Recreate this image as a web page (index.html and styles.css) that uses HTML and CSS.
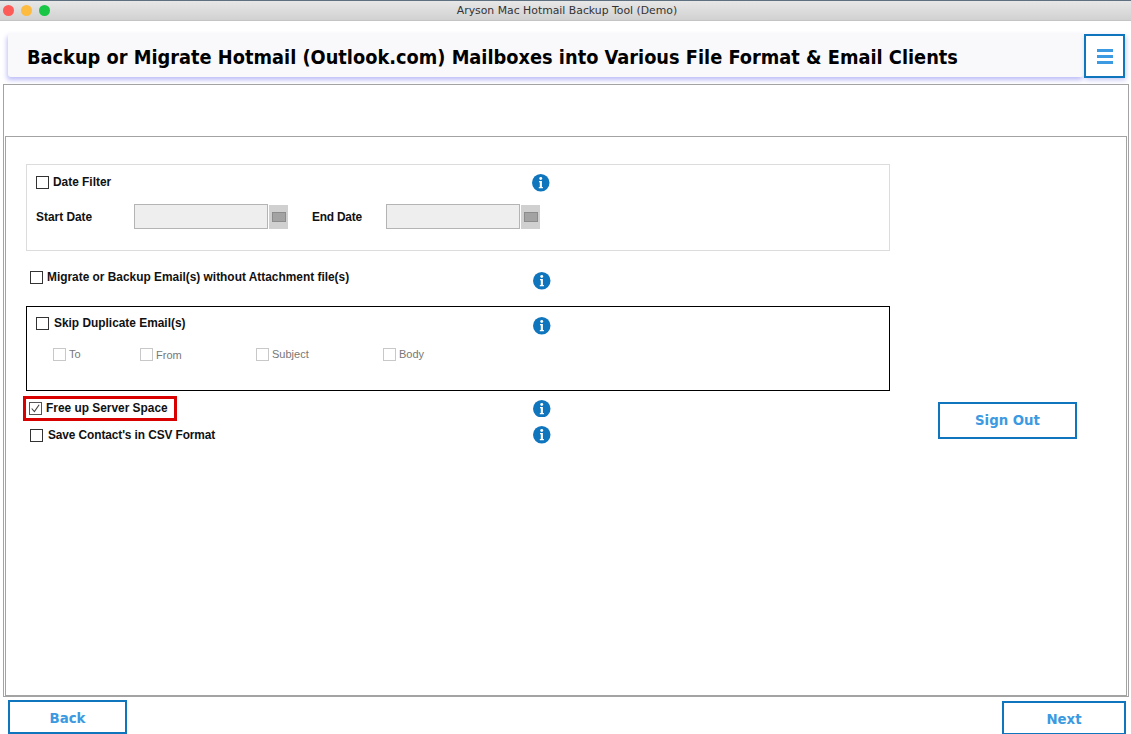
FILE: index.html
```html
<!DOCTYPE html>
<html lang="en">
<head>
<meta charset="utf-8">
<title>Aryson Mac Hotmail Backup Tool (Demo)</title>
<link rel="stylesheet" href="styles.css">
</head>
<body>
<div class="app">
  <div class="titlebar">
    <div class="lights"><span class="light red"></span><span class="light yellow"></span><span class="light green"></span></div>
    <div class="wintitle">Aryson Mac Hotmail Backup Tool (Demo)</div>
  </div>
  <header class="header">
    <h1 class="banner">Backup or Migrate Hotmail (Outlook.com) Mailboxes into Various File Format &amp; Email Clients</h1>
    <button class="menu" aria-label="Menu"><span></span><span></span><span></span></button>
  </header>
  <div class="outer">
    <div class="inner">
      <div class="form">
        <section class="datebox">
          <div class="row row-date">
            <div class="lead"><span class="cb"></span><span class="lbl">Date Filter</span></div>
            <svg class="info" viewBox="0 0 18 18"><circle cx="9" cy="9" r="9" fill="#0f75bd"/><circle cx="9" cy="4.6" r="1.5" fill="#fff"/><path d="M7.2 7.2h3v6.2h1v1.2H7v-1.2h1V8.4h-.8z" fill="#fff"/></svg>
          </div>
          <div class="dates">
            <span class="lbl dlabel">Start Date</span>
            <span class="dinput"></span><span class="dbtn"><i></i></span>
            <span class="lbl dlabel dlabel-end">End Date</span>
            <span class="dinput"></span><span class="dbtn"><i></i></span>
          </div>
        </section>
        <div class="row row-migrate">
          <div class="lead"><span class="cb"></span><span class="lbl">Migrate or Backup Email(s) without Attachment file(s)</span></div>
          <svg class="info" viewBox="0 0 18 18"><circle cx="9" cy="9" r="9" fill="#0f75bd"/><circle cx="9" cy="4.6" r="1.5" fill="#fff"/><path d="M7.2 7.2h3v6.2h1v1.2H7v-1.2h1V8.4h-.8z" fill="#fff"/></svg>
        </div>
        <section class="skipbox">
          <div class="row row-skip">
            <div class="lead"><span class="cb"></span><span class="lbl">Skip Duplicate Email(s)</span></div>
            <svg class="info" viewBox="0 0 18 18"><circle cx="9" cy="9" r="9" fill="#0f75bd"/><circle cx="9" cy="4.6" r="1.5" fill="#fff"/><path d="M7.2 7.2h3v6.2h1v1.2H7v-1.2h1V8.4h-.8z" fill="#fff"/></svg>
          </div>
          <div class="subs">
            <div class="sub sub-to"><span class="cb off"></span><span>To</span></div>
            <div class="sub sub-from"><span class="cb off"></span><span>From</span></div>
            <div class="sub sub-subject"><span class="cb off"></span><span>Subject</span></div>
            <div class="sub"><span class="cb off"></span><span>Body</span></div>
          </div>
        </section>
        <div class="row row-free">
          <div class="lead">
            <div class="highlight"><span class="cb on"><svg viewBox="0 0 13 13"><path d="M2 6.5l3.2 3.6 5.6-8" fill="none" stroke="#444" stroke-width="1.3"/></svg></span><span class="lbl">Free up Server Space</span></div>
          </div>
          <svg class="info" viewBox="0 0 18 18"><circle cx="9" cy="9" r="9" fill="#0f75bd"/><circle cx="9" cy="4.6" r="1.5" fill="#fff"/><path d="M7.2 7.2h3v6.2h1v1.2H7v-1.2h1V8.4h-.8z" fill="#fff"/></svg>
        </div>
        <div class="row row-save">
          <div class="lead"><span class="cb"></span><span class="lbl">Save Contact's in CSV Format</span></div>
          <svg class="info" viewBox="0 0 18 18"><circle cx="9" cy="9" r="9" fill="#0f75bd"/><circle cx="9" cy="4.6" r="1.5" fill="#fff"/><path d="M7.2 7.2h3v6.2h1v1.2H7v-1.2h1V8.4h-.8z" fill="#fff"/></svg>
        </div>
      </div>
      <button class="btn signout">Sign Out</button>
    </div>
  </div>
  <footer class="footer">
    <button class="btn back">Back</button>
    <button class="btn next">Next</button>
  </footer>
</div>
</body>
</html>
```

FILE: styles.css
```css
* { box-sizing: border-box; }
html, body { margin: 0; padding: 0; background: #fff; overflow: hidden; }
.app { width: 1131px; height: 734px; display: flex; flex-direction: column; font-family: "Liberation Sans", Arial, sans-serif; overflow: hidden; }

.titlebar { height: 21px; flex: none; position: relative; display: flex; align-items: center; justify-content: center; background: linear-gradient(#e7e7e7, #d1d1d1); border-top: 1px solid #5f7180; border-bottom: 1px solid #c4c4c4; }
.lights { position: absolute; left: 3px; top: 4px; display: flex; gap: 7px; }
.light { width: 11px; height: 11px; border-radius: 50%; }
.red { background: #fc5b57; }
.yellow { background: #fdbb40; }
.green { background: #19c645; }
.wintitle { font-family: "DejaVu Sans", sans-serif; font-size: 10.85px; color: #333; padding-left: 3px; }

.header { flex: none; height: 45px; margin: 12px 6px 0 8px; display: flex; }
.banner { flex: 1; margin: 0; height: 44px; padding-left: 19px; background: #f9f9fb; border-radius: 3px; box-shadow: -1px 3px 5px #bdbdf8; font: bold 19.8px/49px "DejaVu Sans Condensed", "DejaVu Sans", sans-serif; font-stretch: condensed; color: #000; white-space: nowrap; overflow: hidden; }
.menu { flex: none; width: 41px; height: 44px; margin-top: 1px; padding: 0; background: #fff; border: 2px solid #0f75bd; box-shadow: 1px 2px 5px #c9c9f5; display: flex; flex-direction: column; align-items: center; justify-content: center; gap: 3px; }
.menu span { display: block; width: 16px; height: 3px; background: #3b9ae1; }

.outer { flex: none; height: 613px; margin: 6px 2px 0 3px; padding: 51px 1px 0; border: 1px solid #a3a3a3; }
.inner { height: 560px; padding: 27px 0 0 20px; border: 1px solid #a3a3a3; display: flex; align-items: flex-start; }
.form { width: 864px; flex: none; }

.row { display: flex; align-items: center; min-height: 18px; }
.lead { width: 505px; flex: none; display: flex; align-items: center; }
.info { width: 17.5px; height: 17.5px; flex: none; display: block; }
.cb { width: 13px; height: 13px; flex: none; display: block; border: 1px solid #333; background: #fff; }
.cb.off { border-color: #c8c8c8; }
.cb.on { border-color: #555; }
.cb svg { display: block; width: 11px; height: 11px; }
.lbl { font-size: 11.9px; font-weight: bold; color: #111; margin-left: 4px; white-space: nowrap; }

.datebox { height: 87px; border: 1px solid #dcdcdc; padding: 9px 0 0 9px; }
.row-date .lead { width: 496px; margin-top: -2px; }
.dates { display: flex; align-items: center; margin-top: 12px; }
.dlabel { width: 98px; flex: none; margin-left: 0; }
.dlabel-end { width: 74px; margin-left: 24px; letter-spacing: -0.2px; }
.dinput { width: 134px; height: 25px; flex: none; background: #eee; border: 1px solid #b4b4b4; }
.dbtn { width: 19px; height: 24px; flex: none; margin: 1px 0 0 1px; background: #d0d0d0; display: flex; align-items: center; justify-content: center; }
.dbtn i { display: block; width: 14px; height: 10px; background: #a3a3a3; border: 1px solid #8c8c8c; }

.row-migrate { margin-top: 21px; padding-left: 4px; }
.row-migrate .lead { width: 503px; margin-top: -8px; }
.skipbox { height: 85px; margin-top: 16px; border: 1px solid #000; padding: 10px 0 0 9px; }
.row-skip .lead { width: 497px; margin-top: -6px; }
.row-skip .lbl { margin-left: 5px; }
.subs { display: flex; margin-top: 12px; padding-left: 17px; }
.sub { display: flex; align-items: center; gap: 3px; font-size: 11px; color: #777; width: 87px; }
.sub-from { width: 116px; margin-top: 1px; }
.sub-subject { width: 127px; }

.row-free { margin-top: 5px; height: 25px; }
.highlight { display: flex; align-items: center; width: 154px; height: 25px; margin-left: -3px; padding-left: 3px; border: 3px solid #d90000; }
.row-free .lead { width: 507px; margin-top: -1px; }
.row-save { margin-top: 5px; padding-left: 4px; }
.row-save .lead { width: 503px; }
.row-save .lbl { margin-left: 5px; letter-spacing: -0.1px; }

.btn { background: #fff; border: 2px solid #0f75bd; color: #3b9ae1; font: bold 14.8px "DejaVu Sans Condensed", "DejaVu Sans", sans-serif; font-stretch: condensed; padding: 0; }
.signout { width: 139px; height: 37px; margin: 238px 0 0 48px; flex: none; padding-bottom: 2px; }
.footer { flex: none; display: flex; justify-content: space-between; padding: 3px 5px 0 8px; align-items: flex-start; }
.back { width: 119px; height: 34px; }
.next { width: 124px; height: 34px; margin-top: 1px; }
```
